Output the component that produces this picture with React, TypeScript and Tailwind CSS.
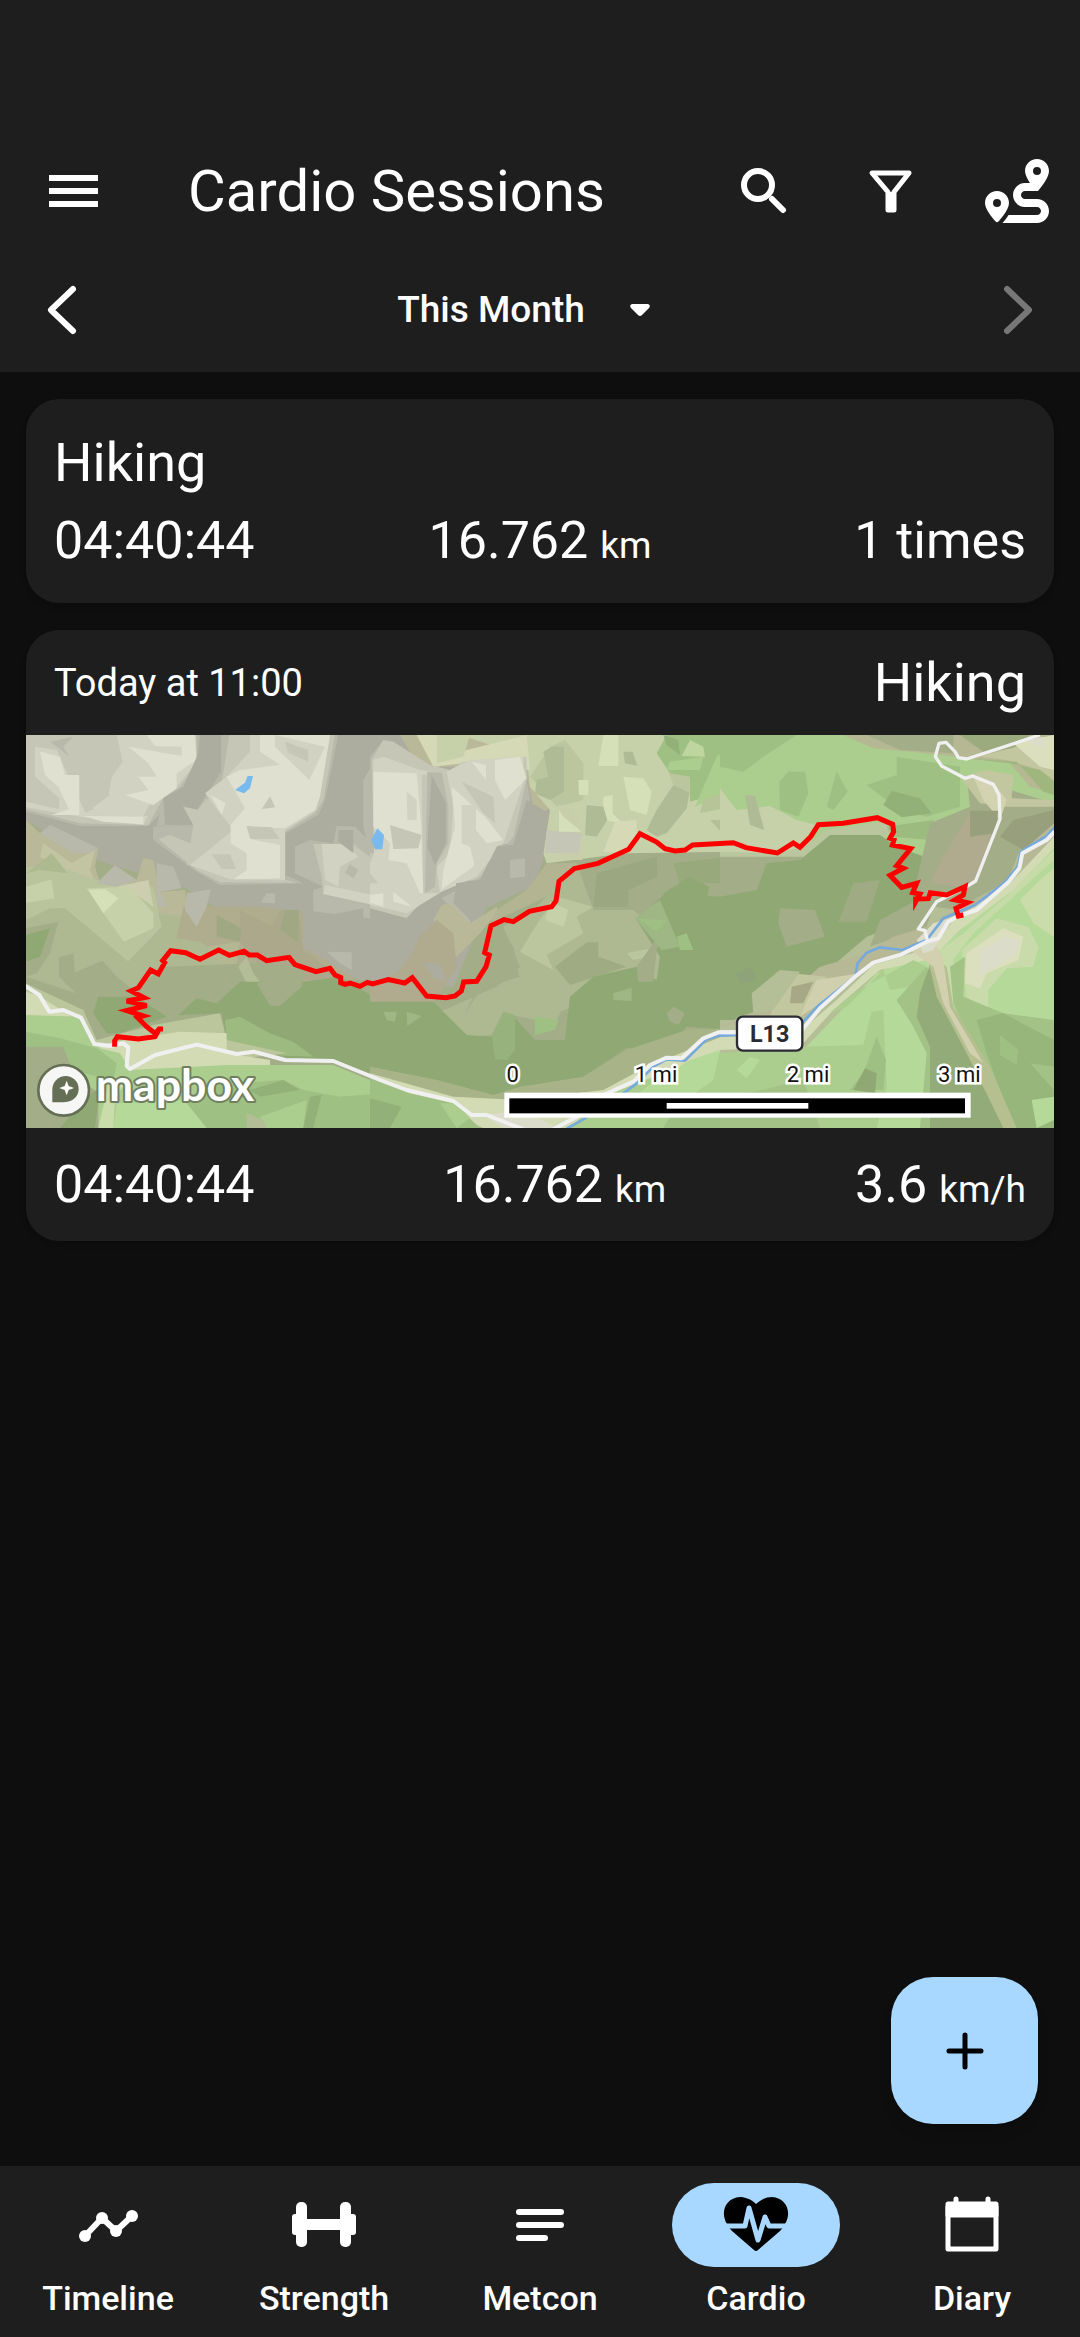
import type { ReactNode } from "react";
import { FaRoute } from "react-icons/fa6";

type Shape = [fill: string, points: string];

const westTerrain: Shape[] = [
  ["#a3ae88", "18,45 1100,45 1100,1224 18,1224"],
  ["#acad9e", "18,45 1100,45 1100,800 980,770 850,690 840,570 590,565 490,500 230,420 150,380 18,300"],
  ["#b8b9aa", "18,45 540,45 530,140 470,230 385,318 180,318 18,275"],
  ["#c5c6b6", "18,45 530,45 530,130 480,200 430,235 385,315 180,310 18,268"],
  ["#d1d2c2", "45,80 110,90 160,200 200,285 385,288 370,315 180,290 18,262 18,245 118,268 118,235 45,170"],
  ["#dfe0d0", "60,95 120,110 135,165 178,165 178,285 95,285 147,268 115,200 75,165"],
  ["#d1d2c2", "290,45 525,45 528,130 470,200 385,258 370,290 190,285 270,225 240,220 308,125"],
  ["#c5c6b6", "120,70 270,80 308,125 280,145 265,228 195,200 150,110"],
  ["#dfe0d0", "380,45 525,45 530,120 470,160 470,205 400,255 315,225 385,210 355,170 410,170 385,130 325,80 485,108 485,80 405,78"],
  ["#dfe0d0", "190,288 370,290 370,313 250,305"],
  ["#c5c6b6", "192,230 222,270 192,270"],
  ["#b8b9aa", "90,65 160,50 130,80 147,108"],
  ["#b8b9aa", "560,45 620,45 605,160 530,270 490,258 515,315 400,320 400,360 430,235 500,190 530,130"],
  ["#acad9e", "560,45 603,45 603,155 530,270 490,258 515,315 435,315 430,235 490,200"],
  ["#b8b9aa", "605,45 955,45 915,240 895,285 797,340 797,465 850,490 600,495 530,455 400,360 400,320 520,315 490,260 530,270 605,160"],
  ["#c5c6b6", "628,45 945,45 910,240 885,280 795,335 795,480 830,488 600,487 530,450 415,358 450,345 510,370 545,430 500,435 520,315 490,260 535,270 605,190"],
  ["#d1d2c2", "690,45 930,45 890,270 795,330 795,480 630,478 510,435 640,330 555,220 620,170 690,95"],
  ["#dfe0d0", "720,45 930,45 900,230 885,270 795,325 680,320 690,357 780,375 780,475 640,478 680,450 680,400 632,370 632,315 675,265 620,170 660,150 780,135 720,95"],
  ["#d1d2c2", "765,45 915,80 868,180 765,80"],
  ["#c5c6b6", "795,65 865,90 865,125 805,98"],
  ["#c5c6b6", "750,228 765,262 725,268"],
  ["#c5c6b6", "680,318 755,322 778,357 692,357"],
  ["#c5c6b6", "575,403 630,403 648,447 605,447"],
  ["#dfe0d0", "572,225 617,250 605,285"],
  ["#c5c6b6", "535,268 560,235 590,330 550,345"],
  ["#b8b9aa", "1085,85 1030,180 1030,320 1050,400 1085,400"],
  ["#b8b9aa", "825,380 870,360 940,370 950,318 1005,320 1085,400 1085,590 1030,608 1030,565 880,595 880,510 910,500 825,460"],
  ["#c5c6b6", "880,372 1000,372 1085,440 1085,560 910,522 905,470"],
  ["#d1d2c2", "905,372 980,372 1015,410 960,440 955,500 915,480"],
  ["#d1d2c2", "915,495 1085,530 1085,560 910,522"],
  ["#b8b9aa", "990,432 1015,450 1000,475 975,458"],
  ["#acad9e", "955,330 1000,330 1000,400 955,365"],
  ["#b8b9aa", "722,548 740,520 765,520 765,550"],
  ["#b9b99a", "18,300 60,340 90,315 235,385 225,440 240,490 290,440 350,480 370,415 400,420 420,515 495,510 500,570 470,655 550,665 540,700 18,620"],
  ["#b8b9aa", "60,340 90,315 235,385 222,398 160,400"],
  ["#c3c5a2", "70,370 155,430 225,390 210,450 230,500 180,480 150,455 60,410"],
  ["#b9c49d", "18,440 150,450 230,480 400,500 425,620 325,725 295,725 130,565 18,600"],
  ["#adb98f", "18,460 95,400 143,460 60,450"],
  ["#b8b9aa", "230,490 285,435 350,480 290,500"],
  ["#b8b9aa", "410,430 460,440 485,505 420,515 440,560 412,560"],
  ["#cdceb0", "290,500 385,480 400,560 330,510"],
  ["#c6d1a9", "200,505 330,500 400,580 400,625 312,665 250,580"],
  ["#d5dfb8", "205,510 255,507 295,535 250,580"],
  ["#c6d1a9", "18,500 95,478 103,535 18,548"],
  ["#aeb992", "18,600 90,565 135,565 295,700 325,725 425,620 415,580 555,600 555,665 600,740 440,740 350,800 200,830 18,770"],
  ["#a3ae88", "18,625 115,605 90,700 50,760 18,770"],
  ["#8fa874", "18,645 90,625 60,710 18,725"],
  ["#a3ae88", "117,712 160,700 165,757 248,722 290,770 340,810 300,850 190,840 117,770"],
  ["#b0ad8f", "490,560 720,560 850,580 850,690 960,700 1010,800 700,770 540,665 470,655"],
  ["#aba88b", "660,570 755,618 780,570 835,570 850,690 1000,800 740,760 660,665"],
  ["#acad9e", "850,570 1085,600 1085,790 1000,770 850,680"],
  ["#b8b9aa", "500,520 573,508 560,560 530,620 495,570"],
  ["#a0a883", "590,585 663,625 660,665 590,650"],
  ["#a0a883", "780,630 795,570 835,570 835,665"],
  ["#b8b9aa", "920,695 995,697 995,750 960,730"],
  ["#b3b892", "560,680 660,665 650,730 600,740"],
  ["#a3ae88", "440,740 700,730 850,740 850,800 700,900 440,900"],
  ["#b3be96", "655,740 680,710 700,760 740,810 735,830 685,800"],
  ["#8fa874", "235,830 350,830 440,890 300,940 260,940 220,880"],
  ["#8fa874", "475,885 530,835 590,850 660,785 850,785 960,770 1010,800 1085,845 1085,1070 960,1030 800,1015 620,960 605,880"],
  ["#a3ae88", "710,790 850,760 845,800 780,857 750,857"],
  ["#9dbb80", "615,900 660,890 750,940 820,965 880,1010 730,1005 620,960"],
  ["#bcc69c", "18,790 60,810 190,870 230,960 400,915 600,880 620,960 800,1000 620,1020 400,1045 330,1070 18,900"],
  ["#d3dbb4", "18,815 60,830 180,905 230,975 320,960 480,935 620,940 620,1000 750,1020 750,1035 400,1050 330,1075 200,1000 18,885"],
  ["#abcd8e", "18,885 180,890 240,985 300,1000 330,1050 620,1035 940,1035 1085,1095 1085,1224 18,1224"],
  ["#9fc083", "18,935 120,955 230,985 290,1030 280,1080 18,1020"],
  ["#a3ae88", "18,980 130,980 160,1060 235,1120 235,1224 18,1224"],
  ["#8fa874", "120,1224 180,1150 240,1100 225,1224"],
  ["#cbdcab", "270,1070 330,1075 285,1130 280,1224 235,1224"],
  ["#b4d998", "290,1150 500,1140 560,1180 600,1224 280,1224"],
  ["#9fc083", "540,1100 790,1080 850,1110 960,1130 1085,1120 1085,1224 560,1224 500,1150"],
  ["#92b178", "690,1110 790,1080 840,1110 720,1130"],
  ["#abcd8e", "720,1190 860,1140 850,1224 740,1224"],
  ["#92b178", "870,1130 905,1125 880,1224 850,1224"],
  ["#b3be96", "680,1180 730,1200 740,1224 680,1224"],
];

const middleTerrain: Shape[] = [
  ["#a3ae88", "0,780 130,700 530,400 1080,380 1080,1224 0,1224"],
  ["#acad9e", "0,45 600,45 540,280 520,420 490,500 350,560 250,800 0,800"],
  ["#b9b99a", "90,45 500,45 550,250 500,300 470,170 430,160 280,140 180,140 130,110"],
  ["#c6d1a9", "270,45 1080,45 1080,395 770,400 530,430 520,400 540,270 480,200 470,110"],
  ["#d5d9b6", "140,45 200,45 250,100 470,45 480,150 280,130 190,140"],
  ["#c6d1a9", "200,45 300,45 280,110 200,130"],
  ["#b8b9aa", "0,110 40,60 10,130 12,400 0,400"],
  ["#c5c6b6", "5,120 40,60 70,65 180,135 240,150 280,125 470,110 470,180 430,370 380,375 330,480 250,485 175,525 110,595 0,565 0,400 12,400"],
  ["#d1d2c2", "10,120 40,110 150,150 220,160 300,120 460,110 460,190 400,370 320,470 215,515 110,580 0,555 0,490 25,490 0,460 0,430 12,400"],
  ["#dfe0d0", "10,155 140,160 155,330 155,400 160,520 150,520 110,430 55,420 60,370 10,320"],
  ["#dfe0d0", "0,525 40,520 40,560 0,548"],
  ["#dfe0d0", "70,515 125,560 70,545"],
  ["#d1d2c2", "110,215 140,240 140,300 112,300"],
  ["#c5c6b6", "60,315 155,345 145,385 70,387"],
  ["#c5c6b6", "155,165 230,155 250,260 240,400 200,440 210,520 160,520"],
  ["#b8b9aa", "172,155 215,158 235,260 235,370 200,430 195,500 165,520"],
  ["#acad9e", "185,165 228,250 228,370 195,435 172,380"],
  ["#dfe0d0", "245,200 345,290 400,360 320,375 310,440 215,508 220,450 255,320"],
  ["#d1d2c2", "275,255 318,255 318,330 362,385 315,440 300,380 275,370"],
  ["#dfe0d0", "305,125 348,135 348,180"],
  ["#c5c6b6", "275,185 370,230 375,310 340,280"],
  ["#dfe0d0", "375,120 450,110 470,175 405,240 375,180"],
  ["#b8b9aa", "470,180 480,240 430,375 385,375 330,480 260,490 250,550 300,600 300,625 240,560 215,535 330,470 430,350"],
  ["#acad9e", "470,240 537,280 520,400 460,430 490,490 360,560 258,530 258,490 330,480 380,380 430,375"],
  ["#b8b9aa", "420,420 465,415 465,470 420,475"],
  ["#b9b99a", "215,555 240,550 300,610 380,560 385,575 330,640 250,720 190,600"],
  ["#b0aa8e", "0,800 90,750 130,690 150,650 200,600 250,640 260,740 190,850 0,848"],
  ["#acad9e", "160,730 210,730 230,785 190,775"],
  ["#b2b492", "380,570 470,510 530,430 620,430 550,520 360,610"],
  ["#bbc69e", "480,170 540,80 585,60 640,130 640,240 560,260"],
  ["#afbb94", "520,95 545,80 582,80 582,215 540,240 495,220 500,180 535,170"],
  ["#d5dfb8", "700,45 745,45 745,138 685,138"],
  ["#afbb94", "760,95 788,95 802,137 765,130"],
  ["#d5dfb8", "760,170 820,175 845,215 830,285 780,270"],
  ["#d5dfb8", "625,180 655,180 655,225 627,225"],
  ["#d5dfb8", "700,230 728,225 728,280 758,310 700,300"],
  ["#afbb94", "650,255 700,260 712,300 680,350 645,345"],
  ["#c9ceaa", "565,255 600,260 640,320 637,420 560,420"],
  ["#d5d9b6", "735,305 800,300 800,350 770,400 700,395"],
  ["#c5c6b6", "530,330 635,340 625,400 525,400"],
  ["#d5dfb8", "567,270 580,290 635,335 567,335"],
  ["#afbb94", "910,195 960,210 950,265 890,340 860,350 830,330 860,270"],
  ["#bbc69e", "875,100 960,160 960,220 910,195"],
  ["#9fc083", "890,45 1080,45 1080,210 960,245 960,170 900,160 860,100"],
  ["#92b178", "880,45 925,60 930,105 890,75"],
  ["#abcd8e", "1080,80 1040,110 975,260 1080,210"],
  ["#abcd8e", "900,125 1000,110 990,150 890,150"],
  ["#bfd5a0", "960,60 1000,80 1005,110 935,108"],
  ["#b7c498", "1000,240 1080,210 1080,260 990,280"],
  ["#b5bf97", "1020,300 1052,300 1052,335"],
  ["#9ba781", "680,460 860,410 862,470 775,510 775,560 670,560"],
  ["#98a97b", "910,430 1080,410 1080,490 930,490"],
  ["#aeb992", "400,620 450,740 380,800 200,880 300,950 370,945 400,880 500,900 640,850 800,870 900,800 870,640 790,570 670,570 620,430 500,560"],
  ["#a3ae88", "380,620 430,680 448,770 330,810 280,890 320,810 350,740"],
  ["#bbc69e", "505,605 560,530 670,560 620,590 640,640 530,705 550,750 450,695"],
  ["#c6d1a9", "540,545 595,570 580,620 525,600"],
  ["#9fab83", "555,740 650,667 685,667 685,710 770,740 600,795"],
  ["#bac69e", "770,700 845,685 840,710 790,720"],
  ["#8fa874", "0,845 190,845 290,945 370,950 410,880 440,900 495,960 585,960 600,830 670,770 800,740 860,780 870,710 800,600 880,525 1080,530 1080,930 950,920 900,980 770,985 640,1070 500,1110 370,1125 200,1080 0,1040"],
  ["#a3ae88", "800,740 870,640 900,600 860,690 850,785 805,785"],
  ["#9fb785", "795,595 870,540 930,680 875,690"],
  ["#8fa874", "880,520 960,470 1018,500 1010,540 980,570 1000,620 930,620"],
  ["#9fc083", "805,597 890,600 860,635"],
  ["#9fc083", "920,650 950,640 970,690 930,690"],
  ["#9fb785", "730,820 785,803 785,843 730,840"],
  ["#9fc083", "495,880 565,900 555,930 495,945"],
  ["#98b27d", "400,875 435,885 435,990 410,1020 375,1018 365,945"],
  ["#9fb785", "40,875 80,875 75,905 50,900"],
  ["#9fb785", "110,875 155,888 112,918"],
  ["#aeb992", "370,830 600,790 570,880 560,900 500,890 440,830"],
  ["#a3ae88", "890,880 910,860 945,880 925,915 900,905"],
  ["#a8b488", "0,1040 200,1080 370,1125 450,1100 640,1070 770,990 950,930 1080,925 1080,1100 600,1224 0,1224"],
  ["#d3dbb4", "0,1060 250,1130 450,1140 700,1110 830,1040 1080,940 1080,985 850,1090 600,1224 340,1224 200,1170 0,1090"],
  ["#9fc083", "0,1072 120,1120 250,1150 330,1224 0,1224"],
  ["#92b178", "0,1135 95,1160 60,1224 0,1224"],
  ["#abcd8e", "210,1150 260,1150 300,1195 260,1224"],
  ["#dcdccb", "340,1185 460,1170 560,1224 400,1224"],
  ["#abcd8e", "700,1130 850,1070 960,1030 1080,985 1080,1224 600,1224"],
  ["#b4d998", "830,1100 960,1020 1050,990 1030,1080 960,1130 780,1140"],
  ["#9fc083", "900,1190 1080,1130 1080,1224 880,1224"],
];

const eastTerrain: Shape[] = [
  ["#b5bf97", "0,700 1002,300 1002,1224 0,1224"],
  ["#abcd8e", "0,45 1002,45 1002,420 0,420"],
  ["#9fc083", "30,45 230,45 130,110 70,155 0,140 0,45"],
  ["#9fc083", "205,155 255,155 265,220 235,290 180,270 178,185"],
  ["#9fc083", "350,155 383,215 340,270 320,260"],
  ["#9fc083", "530,110 720,140 720,260 620,290 540,270 440,195 530,165"],
  ["#b5b892", "370,45 1002,45 1002,220 930,200 870,130 740,115 620,100 460,85"],
  ["#a3ae88", "440,45 700,45 700,100 540,90"],
  ["#9cab7d", "720,45 930,45 880,85 790,95"],
  ["#c3c79f", "780,110 890,80 1002,150 1002,180 960,150 860,120"],
  ["#9fb77f", "740,115 890,125 970,215 1002,225 1002,185 960,150 870,130"],
  ["#dbdfbe", "880,70 1002,45 1002,150 960,140"],
  ["#dcdccb", "920,60 970,50 970,85"],
  ["#c6d1a9", "0,205 50,270 150,258 230,300 290,315 240,390 170,405 0,400"],
  ["#afbb94", "75,225 105,228 133,330 90,315"],
  ["#bac69e", "0,395 170,400 250,380 320,330 520,300 530,340 200,430 0,440"],
  ["#a3ae88", "0,410 250,410 230,560 0,560"],
  ["#92b178", "515,212 600,235 635,280 545,292 490,255"],
  ["#8fa874", "0,530 110,510 140,430 240,420 330,345 480,345 530,380 640,420 600,590 440,650 300,770 170,850 60,900 0,900"],
  ["#9bbb7f", "500,320 640,300 630,360 520,350"],
  ["#a3ae88", "180,565 285,570 315,650 200,680 175,610"],
  ["#9fab83", "400,490 480,480 440,605 355,605"],
  ["#9fb785", "510,620 570,580 620,600 520,680"],
  ["#a3ae88", "630,310 750,260 740,170 1002,250 1002,330 900,390 860,490 720,570 640,560 620,620 450,680 480,600 590,540 590,480"],
  ["#b0aa8e", "750,275 835,300 770,480 720,500 630,490 660,430"],
  ["#c3c79f", "720,170 800,150 880,165 875,235 1002,240 1002,260 860,260 780,250"],
  ["#d3d3b2", "760,170 830,200 860,240 840,300 790,240"],
  ["#989f7c", "750,272 835,272 825,340 750,350"],
  ["#989f7c", "880,300 1002,270 1002,320 910,390 840,350"],
  ["#b0aa8e", "665,405 790,400 760,430 665,430"],
  ["#b7b895", "440,700 520,650 620,620 720,560 870,480 900,400 1002,310 1002,360 700,640 460,745 380,770 250,890 240,920 150,890 0,920 60,890 170,850 300,740"],
  ["#c3c79f", "170,755 320,770 280,840 230,900 150,890 180,800"],
  ["#b5bf97", "95,820 180,750 240,755 160,870 100,880"],
  ["#d0d0ae", "290,780 420,760 330,830 240,890"],
  ["#a7a886", "215,800 280,785 250,850 210,850"],
  ["#8fa37a", "50,760 95,740 110,780 60,790"],
  ["#b4d998", "250,990 470,760 700,650 1002,370 1002,1224 0,1224 0,1000"],
  ["#d3dbb4", "240,935 350,840 460,735 640,680 700,600 870,490 1002,350 1002,385 880,510 720,630 660,690 620,720 480,750 340,870 240,980 0,990 0,950"],
  ["#c6dba8", "660,690 730,640 870,520 960,430 1002,390 1002,420 870,540 760,640 700,720 720,850 690,850"],
  ["#abcd8e", "400,820 580,720 620,740 600,850 530,850 570,800 510,810 490,750 380,860 330,880"],
  ["#abcd8e", "240,980 430,975 455,875 490,870 500,1100 470,1224 0,1224 0,1000"],
  ["#b4d998", "90,1010 120,1020 80,1075 50,1050"],
  ["#9fc083", "390,1110 430,1060 470,950 498,1020 490,1110"],
  ["#8fa874", "400,1110 435,1045 470,1060 465,1120"],
  ["#cbdcab", "900,540 960,480 1002,445 1002,650 940,610"],
  ["#c9dbaa", "725,690 830,595 925,620 955,680 940,740 860,745 805,810 805,890 740,830"],
  ["#dbdfbe", "740,700 850,625 910,650 895,720 800,760 780,805 735,790"],
  ["#dcdccb", "785,690 860,650 900,665 880,705 775,770"],
  ["#a2c286", "690,740 735,710 730,830 850,880 1002,900 1002,1224 870,1224 800,1080 700,850"],
  ["#97b67c", "770,900 850,880 1002,960 1002,1040 930,1030 1002,1110 1002,1224 880,1224 800,1000"],
  ["#9fc083", "840,945 895,990 890,1035 840,1005"],
  ["#b4d998", "935,1140 1002,1130 1002,1200 950,1224"],
  ["#a2c286", "530,840 620,740 700,900 850,1224 600,1224 620,1000 580,920"],
  ["#93ab78", "600,820 635,720 690,870 790,1060 870,1224 630,1224 630,980 590,890"],
  ["#b5bf8f", "620,700 680,740 700,860 810,1040 890,1224 850,1224 740,1000 650,830"],
  ["#d3d0b0", "570,690 640,660 670,720 690,860 790,1030 750,1000 670,850 640,740"],
  ["#dcdccb", "590,660 640,610 700,590 640,690 610,700"],
  ["#a2c286", "0,1140 250,1080 300,1224 0,1224"],
];

const lakes: Shape[] = [
  ["#78b9ee", "645,210 675,188 683,168 699,168 690,205 672,220"],
  ["#78b9ee", "1072,325 1092,345 1087,388 1065,388 1054,360"],
];

function Polygons({ shapes }: { shapes: Shape[] }) {
  return (
    <>
      {shapes.map(([fill, points]) => (
        <polygon key={points} fill={fill} points={points} />
      ))}
    </>
  );
}

const scaleMarks = [
  { label: "0", x: 1460 },
  { label: "1 mi", x: 1890 },
  { label: "2 mi", x: 2346 },
  { label: "3 mi", x: 2800 },
];

function RouteMap() {
  return (
    <svg viewBox="0 0 3084 1179" className="block w-full" role="img" aria-label="Map of the hiking route">
      <rect width="3084" height="1179" fill="#a3ae88" />
      <g transform="translate(-18 -45)">
        <Polygons shapes={westTerrain} />
      </g>
      <g transform="translate(1032 -45)">
        <Polygons shapes={middleTerrain} />
      </g>
      <g transform="translate(2082 -45)">
        <Polygons shapes={eastTerrain} />
      </g>
      <g transform="translate(-18 -45)">
        <Polygons shapes={lakes} />
      </g>

      <g fill="none" stroke="#76a9dd" strokeWidth="8" strokeLinejoin="round">
        <path transform="translate(1032 -45)" d="M590 1226 645 1195 760 1120 800 1090 850 1040 890 1018 945 1022 1010 958 1045 947 1100 945" />
        <path transform="translate(2082 -45)" d="M0 945H150L250 905 295 857 405 770 413 730 440 698 480 682 547 690 620 660 670 595 710 578 765 555 855 487 893 440 902 395 980 348 1004 322" />
      </g>
      <g fill="none" stroke="#f0f0f0" strokeWidth="12" strokeLinejoin="round">
        <path transform="translate(-18 -45)" d="M16 798 58 825 88 875 130 870 183 893 223 972 270 978 310 970 325 982 320 1038 330 1047 405 1005 530 974 650 1002 702 995 795 1020 940 1023 1080 1080 1160 1110 1300 1143 1355 1185 1400 1185 1510 1228" />
        <path transform="translate(1032 -45)" d="M550 1228 620 1190 700 1125 790 1085 840 1035 890 1013 935 1015 1000 955 1045 937 1100 937" />
        <path transform="translate(2082 -45)" d="M0 937H240L300 865 405 770 460 728 545 703 620 665 655 655 685 605 710 590 770 570 865 487 898 445 907 400 980 360 1004 335" />
        <path transform="translate(2082 -45)" d="M960 45 740 117 715 113 705 95 678 67 657 70 646 110 665 138 735 175 758 168 820 193 837 225 840 297 767 483 740 500 650 545 595 627 615 632 622 660" strokeWidth="10" />
      </g>
      <path
        fill="none"
        stroke="#ff0000"
        strokeWidth="15"
        d="M266 935V917L274 905 337 912 387 905 400 882H411M400 882 387 895 362 875 335 848 352 843 302 827 362 812 302 798 354 788 315 768 337 758 374 705 397 717 416 683 410 677 434 647 479 653 522 673 578 645 610 661 654 649 670 660H694L722 677 789 667 807 689 870 710 912 700 927 720 944 727V743L957 748 972 744 1002 754 1024 742 1040 747 1087 734 1136 744 1159 728 1202 783 1260 788 1287 783 1306 768 1313 741 1352 739 1380 695 1390 660 1376 653 1395 572 1434 554 1462 560 1510 529 1577 515 1590 498 1599 439 1645 401 1716 385 1808 343 1842 296 1892 321 1917 341 1947 348 1977 345 2000 330 2122 323 2160 338 2254 354 2302 324 2322 337 2354 305 2377 269 2452 265 2554 248 2600 268 2603 290 2592 310 2604 315 2599 330 2654 341 2612 392 2632 400 2592 421 2627 457 2672 445 2660 473 2682 477 2669 500V492L2707 491 2713 473 2762 480 2817 455 2812 480 2787 495 2824 503 2790 520 2797 543 2812 540"
      />

      <rect x="2133" y="845" width="196" height="102" rx="18" fill="#fff" stroke="#2a2b33" strokeWidth="7" />
      <text x="2231" y="921" textAnchor="middle" className="text-[70px] font-bold" fill="#2a2b33">
        L13
      </text>

      <rect x="1435" y="1073" width="1399" height="75" fill="#fff" />
      <rect x="1450" y="1090" width="1367" height="45" fill="#000" />
      <rect x="1922" y="1104" width="425" height="17" fill="#fff" />
      {scaleMarks.map(({ label, x }) => (
        <text
          key={label}
          x={x}
          y="1042"
          textAnchor="middle"
          className="text-[66px]"
          fill="#111"
          stroke="#fff"
          strokeWidth="15"
          paintOrder="stroke"
        >
          {label}
        </text>
      ))}

      <circle cx="113" cy="1066" r="76" fill="#f6f7f5" stroke="#656f55" strokeWidth="8" />
      <path d="M79 1102V1063A40 40 0 0 1 119 1023 39 39 0 0 1 158 1062C158 1088 135 1102 110 1102Z" fill="#656f55" />
      <path d="m122 1037 6 16 16 6-16 6-6 16-6-16-16-6 16-6Z" fill="#fff" />
      <text
        x="209"
        y="1097"
        className="font-[Lato,sans-serif] text-[134px] font-bold"
        fill="#fff"
        stroke="#6f7f5f"
        strokeWidth="12"
        strokeLinejoin="round"
        paintOrder="stroke"
      >
        mapbox
      </text>
    </svg>
  );
}

function Stat({ value, unit }: { value: string; unit?: string }) {
  return (
    <span className="text-[52px] leading-[64px] whitespace-nowrap">
      {value}
      {unit && <span className="ml-3 text-[37px] leading-none">{unit}</span>}
    </span>
  );
}

function NavItem({ label, active = false, children }: { label: string; active?: boolean; children: ReactNode }) {
  return (
    <a href="#" aria-current={active ? "page" : undefined} className="flex flex-1 flex-col items-center gap-[11px]">
      <span className={active ? "flex h-[84px] w-[168px] items-center justify-center rounded-full bg-[#a8d8ff] text-black" : "flex h-[84px] w-[168px] items-center justify-center"}>
        <svg viewBox="0 0 66 66" className="size-[66px]" fill="none" stroke="currentColor" strokeLinecap="round" strokeLinejoin="round">
          {children}
        </svg>
      </span>
      <span className="text-[34px] leading-[40px] font-medium">{label}</span>
    </a>
  );
}

export default function App() {
  return (
    <div className="flex min-h-screen flex-col bg-[#0e0e0e] font-[Roboto,sans-serif] text-white">
      <header className="bg-[#1e1e1e] pt-[134px]">
        <div className="flex h-[114px] items-center pr-[31px] pl-10">
          <button aria-label="Open menu">
            <svg viewBox="0 0 66 66" className="size-[66px]" fill="none" stroke="currentColor" strokeWidth="6">
              <path d="M9 20H58M9 33H58M9 46H58" />
            </svg>
          </button>
          <h1 className="ml-[82px] flex-1 text-[58px] leading-[72px]">Cardio Sessions</h1>
          <div className="flex items-center gap-[61px]">
            <button aria-label="Search">
              <svg viewBox="0 0 66 66" className="size-[66px]" fill="none" stroke="currentColor" strokeWidth="6" strokeLinecap="round">
                <circle cx="27" cy="27" r="14" />
                <path d="M41 41 52 52" />
              </svg>
            </button>
            <button aria-label="Filter">
              <svg viewBox="0 0 66 66" className="size-[66px]" fill="none" stroke="currentColor" strokeWidth="5" strokeLinejoin="round">
                <path d="M14 15H51L36 34V52H30V34Z" />
                <path d="M33 34V52" strokeWidth="6" />
              </svg>
            </button>
            <button aria-label="Routes">
              <FaRoute className="size-[64px]" />
            </button>
          </div>
        </div>
        <div className="flex h-[124px] items-center justify-between px-[29px]">
          <button aria-label="Previous period">
            <svg viewBox="0 0 66 66" className="size-[66px]" fill="none" stroke="currentColor" strokeWidth="6" strokeLinecap="round" strokeLinejoin="round">
              <path d="M44 12 22 33 44 54" />
            </svg>
          </button>
          <div className="mr-8 flex items-center">
            <select aria-label="Period" defaultValue="This Month" className="-mr-5 appearance-none bg-transparent pr-16 text-[37px] leading-[44px] font-medium [field-sizing:content]">
              <option>This Week</option>
              <option>This Month</option>
              <option>This Year</option>
            </select>
            <svg viewBox="0 0 22 14" className="pointer-events-none h-[14px] w-[22px]" fill="currentColor" aria-hidden="true">
              <path d="M3 1H19Q22 2 20 5L13 12Q11 14 9 12L2 5Q0 2 3 1Z" />
            </svg>
          </div>
          <button aria-label="Next period" disabled className="text-[#777]">
            <svg viewBox="0 0 66 66" className="size-[66px]" fill="none" stroke="currentColor" strokeWidth="6" strokeLinecap="round" strokeLinejoin="round">
              <path d="M22 12 44 33 22 54" />
            </svg>
          </button>
        </div>
      </header>

      <main className="flex flex-1 flex-col gap-[27px] px-[26px] pt-[27px]">
        <section className="rounded-[33px] bg-[#1e1e1e] px-7 pt-8 pb-[30px] shadow-md">
          <h2 className="text-[54px] leading-[64px]">Hiking</h2>
          <div className="mt-[14px] grid grid-cols-[1fr_auto_1fr] items-baseline">
            <Stat value="04:40:44" />
            <Stat value="16.762" unit="km" />
            <div className="text-right">
              <Stat value="1 times" />
            </div>
          </div>
        </section>

        <article className="rounded-[33px] bg-[#1e1e1e] shadow-md">
          <div className="flex h-[105px] items-center justify-between px-7">
            <time className="text-[38px] leading-[44px]">Today at 11:00</time>
            <h2 className="text-[54px] leading-[64px]">Hiking</h2>
          </div>
          <RouteMap />
          <div className="flex h-[113px] items-center justify-between px-7">
            <Stat value="04:40:44" />
            <Stat value="16.762" unit="km" />
            <Stat value="3.6" unit="km/h" />
          </div>
        </article>

        <button aria-label="Add session" className="mt-auto mr-4 mb-[42px] flex size-[147px] items-center justify-center self-end rounded-[42px] bg-[#a8d8ff] text-black shadow-lg">
          <svg viewBox="0 0 66 66" className="size-[66px]" stroke="currentColor" strokeWidth="5" strokeLinecap="round">
            <path d="M33 17V49M17 33H49" />
          </svg>
        </button>
      </main>

      <nav aria-label="Main" className="sticky bottom-0 flex bg-[#1e1e1e] pt-[17px] pb-[19px]">
        <NavItem label="Timeline">
          <path d="M10 44 27 26 41 39 57 24" strokeWidth="6" />
          <g fill="currentColor" stroke="none">
            <circle cx="10" cy="44" r="6" />
            <circle cx="27" cy="26" r="6" />
            <circle cx="41" cy="39" r="6" />
            <circle cx="57" cy="24" r="6" />
          </g>
        </NavItem>
        <NavItem label="Strength">
          <g fill="currentColor" stroke="none">
            <rect x="1" y="22" width="10" height="21" rx="3" />
            <rect x="55" y="22" width="10" height="21" rx="3" />
            <rect x="5" y="10" width="11" height="45" rx="5" />
            <rect x="49" y="10" width="11" height="45" rx="5" />
            <rect x="14" y="27" width="38" height="11" />
          </g>
        </NavItem>
        <NavItem label="Metcon">
          <path d="M12 20H54M12 33H54M12 46H38" strokeWidth="6" />
        </NavItem>
        <NavItem label="Cardio" active>
          <path fill="currentColor" stroke="none" d="M33 12C28 7 22 5 17 5C2 6-3 21 4 32Q6 36 9 39L31 58Q33 60 35 58L57 39Q60 36 62 32C69 21 64 6 49 5C44 5 38 7 33 12Z" />
          <path d="M1 34H22L26 16 35 48 42 25 46 34H65" stroke="#a8d8ff" strokeWidth="5" />
        </NavItem>
        <NavItem label="Diary">
          <path d="M9 15H57V57H9Z" strokeWidth="5" />
          <path d="M9 12H57V23H9Z" fill="currentColor" strokeWidth="5" />
          <path d="M17 7V13M49 7V13" strokeWidth="5" />
        </NavItem>
      </nav>
    </div>
  );
}
